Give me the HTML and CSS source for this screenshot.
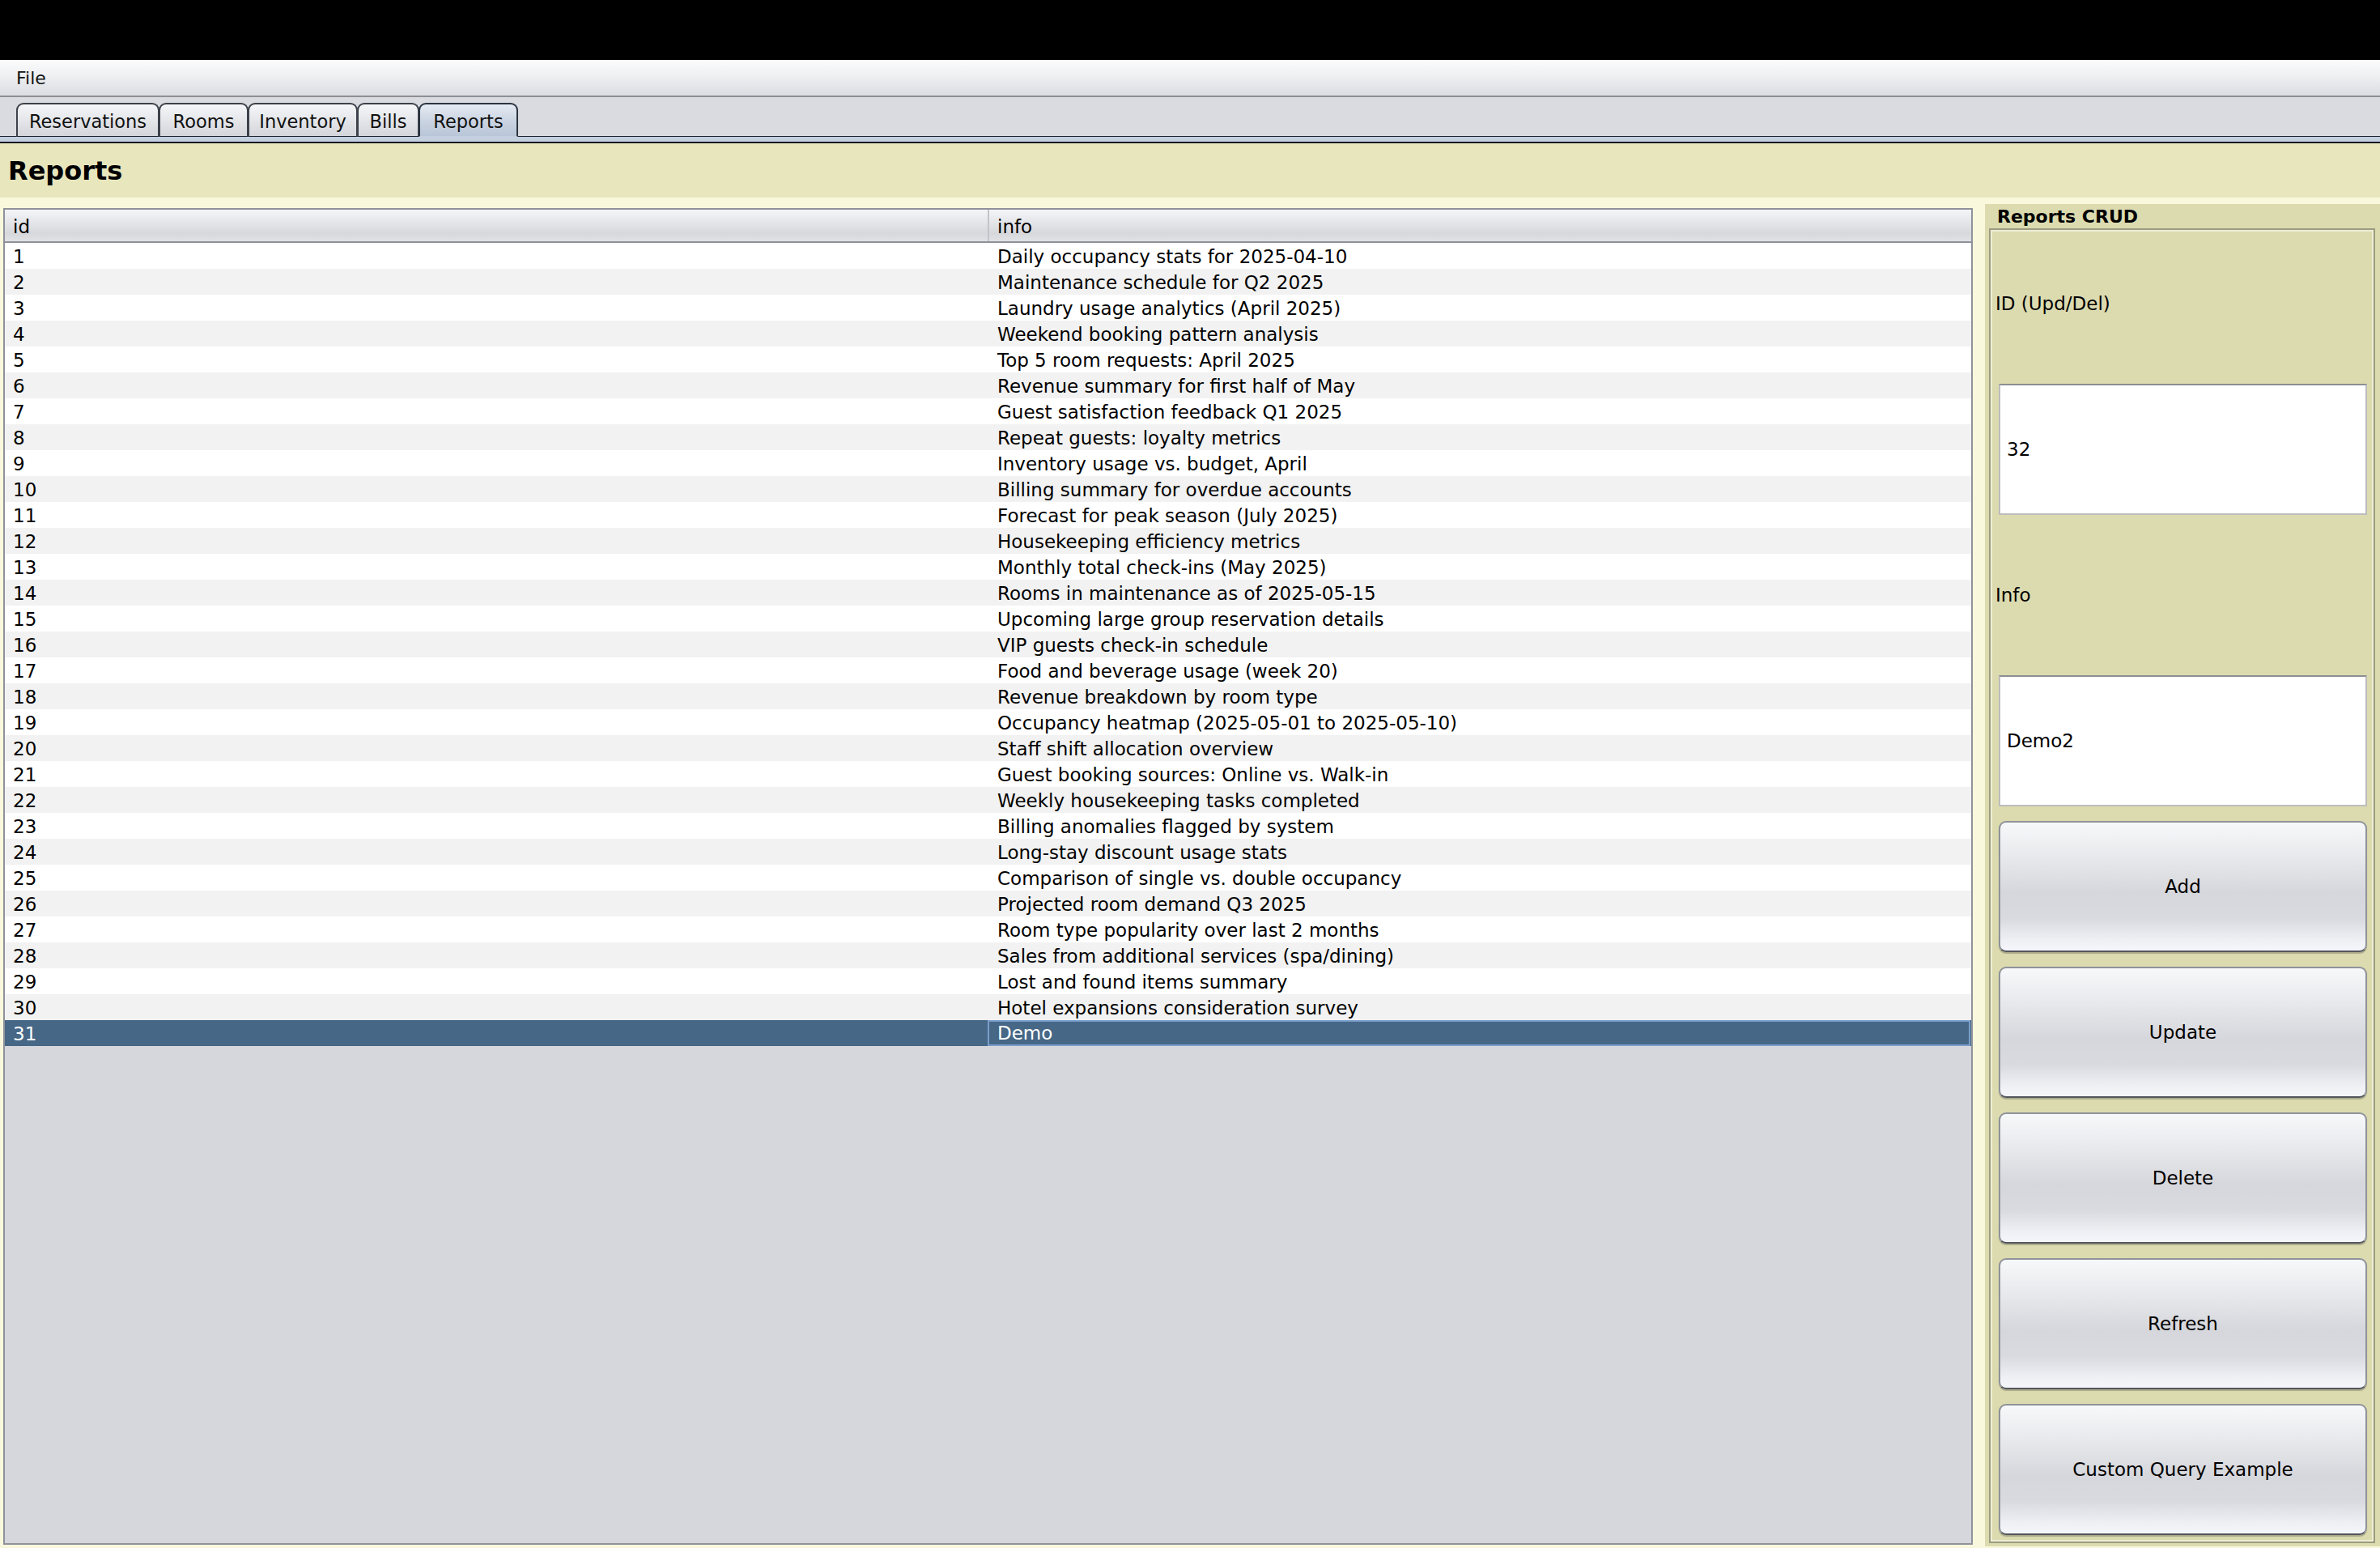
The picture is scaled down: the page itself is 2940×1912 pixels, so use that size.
FILE: index.html
```html
<!DOCTYPE html>
<html lang="en">
<head>
<meta charset="utf-8">
<title>Reports</title>
<link rel="stylesheet" href="styles.css">
</head>
<body>
<div class="app">
  <div class="titlebar"></div>
  <div class="menubar"><span class="menu-item">File</span></div>
  <div class="tabstrip">
    <div class="tabs">
      <div class="tab tab-res">Reservations</div>
      <div class="tab tab-rooms">Rooms</div>
      <div class="tab tab-inv">Inventory</div>
      <div class="tab tab-bills">Bills</div>
      <div class="tab tab-rep selected">Reports</div>
    </div>
  </div>
  <div class="tabline"></div>
  <div class="page-header"><h1>Reports</h1></div>
  <div class="content">
    <div class="table">
      <div class="thead">
        <div class="th th-id">id</div>
        <div class="th th-info">info</div>
      </div>
      <div class="tbody">
        <div class="tr"><div class="td td-id">1</div><div class="td td-info">Daily occupancy stats for 2025-04-10</div></div>
        <div class="tr"><div class="td td-id">2</div><div class="td td-info">Maintenance schedule for Q2 2025</div></div>
        <div class="tr"><div class="td td-id">3</div><div class="td td-info">Laundry usage analytics (April 2025)</div></div>
        <div class="tr"><div class="td td-id">4</div><div class="td td-info">Weekend booking pattern analysis</div></div>
        <div class="tr"><div class="td td-id">5</div><div class="td td-info">Top 5 room requests: April 2025</div></div>
        <div class="tr"><div class="td td-id">6</div><div class="td td-info">Revenue summary for first half of May</div></div>
        <div class="tr"><div class="td td-id">7</div><div class="td td-info">Guest satisfaction feedback Q1 2025</div></div>
        <div class="tr"><div class="td td-id">8</div><div class="td td-info">Repeat guests: loyalty metrics</div></div>
        <div class="tr"><div class="td td-id">9</div><div class="td td-info">Inventory usage vs. budget, April</div></div>
        <div class="tr"><div class="td td-id">10</div><div class="td td-info">Billing summary for overdue accounts</div></div>
        <div class="tr"><div class="td td-id">11</div><div class="td td-info">Forecast for peak season (July 2025)</div></div>
        <div class="tr"><div class="td td-id">12</div><div class="td td-info">Housekeeping efficiency metrics</div></div>
        <div class="tr"><div class="td td-id">13</div><div class="td td-info">Monthly total check-ins (May 2025)</div></div>
        <div class="tr"><div class="td td-id">14</div><div class="td td-info">Rooms in maintenance as of 2025-05-15</div></div>
        <div class="tr"><div class="td td-id">15</div><div class="td td-info">Upcoming large group reservation details</div></div>
        <div class="tr"><div class="td td-id">16</div><div class="td td-info">VIP guests check-in schedule</div></div>
        <div class="tr"><div class="td td-id">17</div><div class="td td-info">Food and beverage usage (week 20)</div></div>
        <div class="tr"><div class="td td-id">18</div><div class="td td-info">Revenue breakdown by room type</div></div>
        <div class="tr"><div class="td td-id">19</div><div class="td td-info">Occupancy heatmap (2025-05-01 to 2025-05-10)</div></div>
        <div class="tr"><div class="td td-id">20</div><div class="td td-info">Staff shift allocation overview</div></div>
        <div class="tr"><div class="td td-id">21</div><div class="td td-info">Guest booking sources: Online vs. Walk-in</div></div>
        <div class="tr"><div class="td td-id">22</div><div class="td td-info">Weekly housekeeping tasks completed</div></div>
        <div class="tr"><div class="td td-id">23</div><div class="td td-info">Billing anomalies flagged by system</div></div>
        <div class="tr"><div class="td td-id">24</div><div class="td td-info">Long-stay discount usage stats</div></div>
        <div class="tr"><div class="td td-id">25</div><div class="td td-info">Comparison of single vs. double occupancy</div></div>
        <div class="tr"><div class="td td-id">26</div><div class="td td-info">Projected room demand Q3 2025</div></div>
        <div class="tr"><div class="td td-id">27</div><div class="td td-info">Room type popularity over last 2 months</div></div>
        <div class="tr"><div class="td td-id">28</div><div class="td td-info">Sales from additional services (spa/dining)</div></div>
        <div class="tr"><div class="td td-id">29</div><div class="td td-info">Lost and found items summary</div></div>
        <div class="tr"><div class="td td-id">30</div><div class="td td-info">Hotel expansions consideration survey</div></div>
        <div class="tr selected"><div class="td td-id">31</div><div class="td td-info">Demo</div></div>
      </div>
    </div>
    <div class="side">
      <div class="side-title">Reports CRUD</div>
      <div class="side-box">
        <div class="label">ID (Upd/Del)</div>
        <div class="field">32</div>
        <div class="label">Info</div>
        <div class="field">Demo2</div>
        <div class="btn">Add</div>
        <div class="btn">Update</div>
        <div class="btn">Delete</div>
        <div class="btn">Refresh</div>
        <div class="btn">Custom Query Example</div>
      </div>
    </div>
  </div>
</div>
</body>
</html>
```
FILE: styles.css
```css
* { box-sizing: border-box; }
html, body { margin: 0; padding: 0; }
body {
  width: 2940px;
  height: 1912px;
  overflow: hidden;
  font-family: "DejaVu Sans", "Liberation Sans", sans-serif;
  color: #000;
  background: #f9f8dc;
}
.app { display: flex; flex-direction: column; height: 1912px; }
.titlebar { height: 74px; background: #000; flex: none; }
.menubar {
  height: 46px;
  flex: none;
  background: linear-gradient(#fbfbfc, #f0f1f3 40%, #dcdde2);
  border-bottom: 2px solid #8e8f94;
  display: flex;
  align-items: center;
  padding-left: 20px;
  font-size: 22px;
}
.menu-item { color: #111; }
.tabstrip {
  flex: none;
  height: 49px;
  background: #dadbe0;
  padding: 7px 0 0 20px;
  border-bottom: 1px solid #1d2330;
  display: flex;
}
.tabs { display: flex; align-items: flex-end; }
.tab {
  height: 42px;
  margin-bottom: -1px;
  border: 2px solid #3c414a;
  border-radius: 9px 9px 0 0;
  background: linear-gradient(#f5f6f8, #e4e6ea 50%, #d3d5da);
  font-size: 22.5px;
  display: flex;
  align-items: center;
  justify-content: center;
  padding-top: 2px;
  color: #111;
  border-bottom: 1px solid #1d2330;
}
.tab + .tab { margin-left: -1px; }
.tab-res { width: 177px; }
.tab-rooms { width: 111px; }
.tab-inv { width: 136px; }
.tab-bills { width: 77px; }
.tab-rep { width: 123px; }
.tab.selected {
  background: linear-gradient(#e6ebf2, #c9d3e1 55%, #b9c6d8);
  border-color: #2b3442;
  border-bottom: 1px solid #c4cfe0;
  position: relative;
  z-index: 1;
}
.tabline {
  flex: none;
  height: 8px;
  background: #c4cfe0;
  border-bottom: 2px solid #141923;
}
.page-header {
  flex: none;
  height: 67px;
  background: #e8e6bd;
  display: flex;
  align-items: center;
  padding-left: 10px;
}
.page-header h1 {
  margin: 0;
  font-size: 32px;
  font-weight: bold;
  color: #000;
}
.content {
  flex: 1;
  display: flex;
  padding: 8px 0 0 4px;
  gap: 15px;
  min-height: 0;
}
.table {
  width: 2433px;
  margin-top: 5px;
  margin-bottom: 4px;
  border: 2px solid #8f929a;
  background: #d6d7dc;
  display: flex;
  flex-direction: column;
}
.thead {
  height: 41px;
  flex: none;
  display: grid;
  grid-template-columns: 1214px 1fr;
  background: linear-gradient(#f4f5f7, #e3e4e8 45%, #d7d8dc 75%, #e1e2e6);
  border-bottom: 2px solid #8e9199;
}
.th {
  font-size: 23px;
  display: flex;
  align-items: center;
  padding-left: 10px;
  padding-top: 2px;
}
.th-info { border-left: 2px solid #c2c4c9; padding-left: 10px; }
.tbody { display: flex; flex-direction: column; }
.tr {
  height: 32px;
  display: grid;
  grid-template-columns: 1214px 1fr;
  background: #fff;
}
.tr:nth-child(even) { background: #f2f2f2; }
.td {
  font-size: 23px;
  line-height: 30px;
  padding-top: 2px;
  white-space: nowrap;
  padding-left: 10px;
  overflow: hidden;
}
.td-info { padding-left: 12px; }
.tr.selected { background: #466786; color: #fff; }
.tr.selected .td-info {
  border: 2px solid #7b9ecb;
  line-height: 28px;
  padding-top: 0;
  padding-left: 10px;
  margin-right: 1px;
}
.side {
  width: 488px;
  margin-bottom: 2px;
  background: #dcdbb0;
  display: flex;
  flex-direction: column;
  padding: 0 6px 4px 5px;
}
.side-title {
  height: 30px;
  font-size: 22px;
  font-weight: bold;
  padding-left: 10px;
  display: flex;
  align-items: center;
  color: #000;
}
.side-box {
  flex: 1;
  border: 2px solid #9c9c7f;
  box-shadow: inset 0 0 0 2px #eeedd4;
  padding: 10px 8px 8px 10px;
  display: grid;
  grid-template-rows: repeat(9, 162px);
  row-gap: 18px;
}
.label {
  font-size: 23px;
  display: flex;
  align-items: center;
  margin-left: -4px;
  color: #000;
}
.field {
  background: #fff;
  border: 2px solid #bdbdbd;
  border-top-color: #8c8e93;
  font-size: 23px;
  display: flex;
  align-items: center;
  padding-left: 8px;
}
.btn {
  border: 2px solid #8f939a;
  border-bottom-color: #54575d;
  border-radius: 9px;
  background: linear-gradient(#f7f8fa, #e9eaed 25%, #d6d7dc 55%, #d9dadf 75%, #eef0f4 92%, #f4f6fb);
  box-shadow: 0 2px 1px #a9a98a;
  font-size: 23px;
  display: flex;
  align-items: center;
  justify-content: center;
  color: #000;
}
```
